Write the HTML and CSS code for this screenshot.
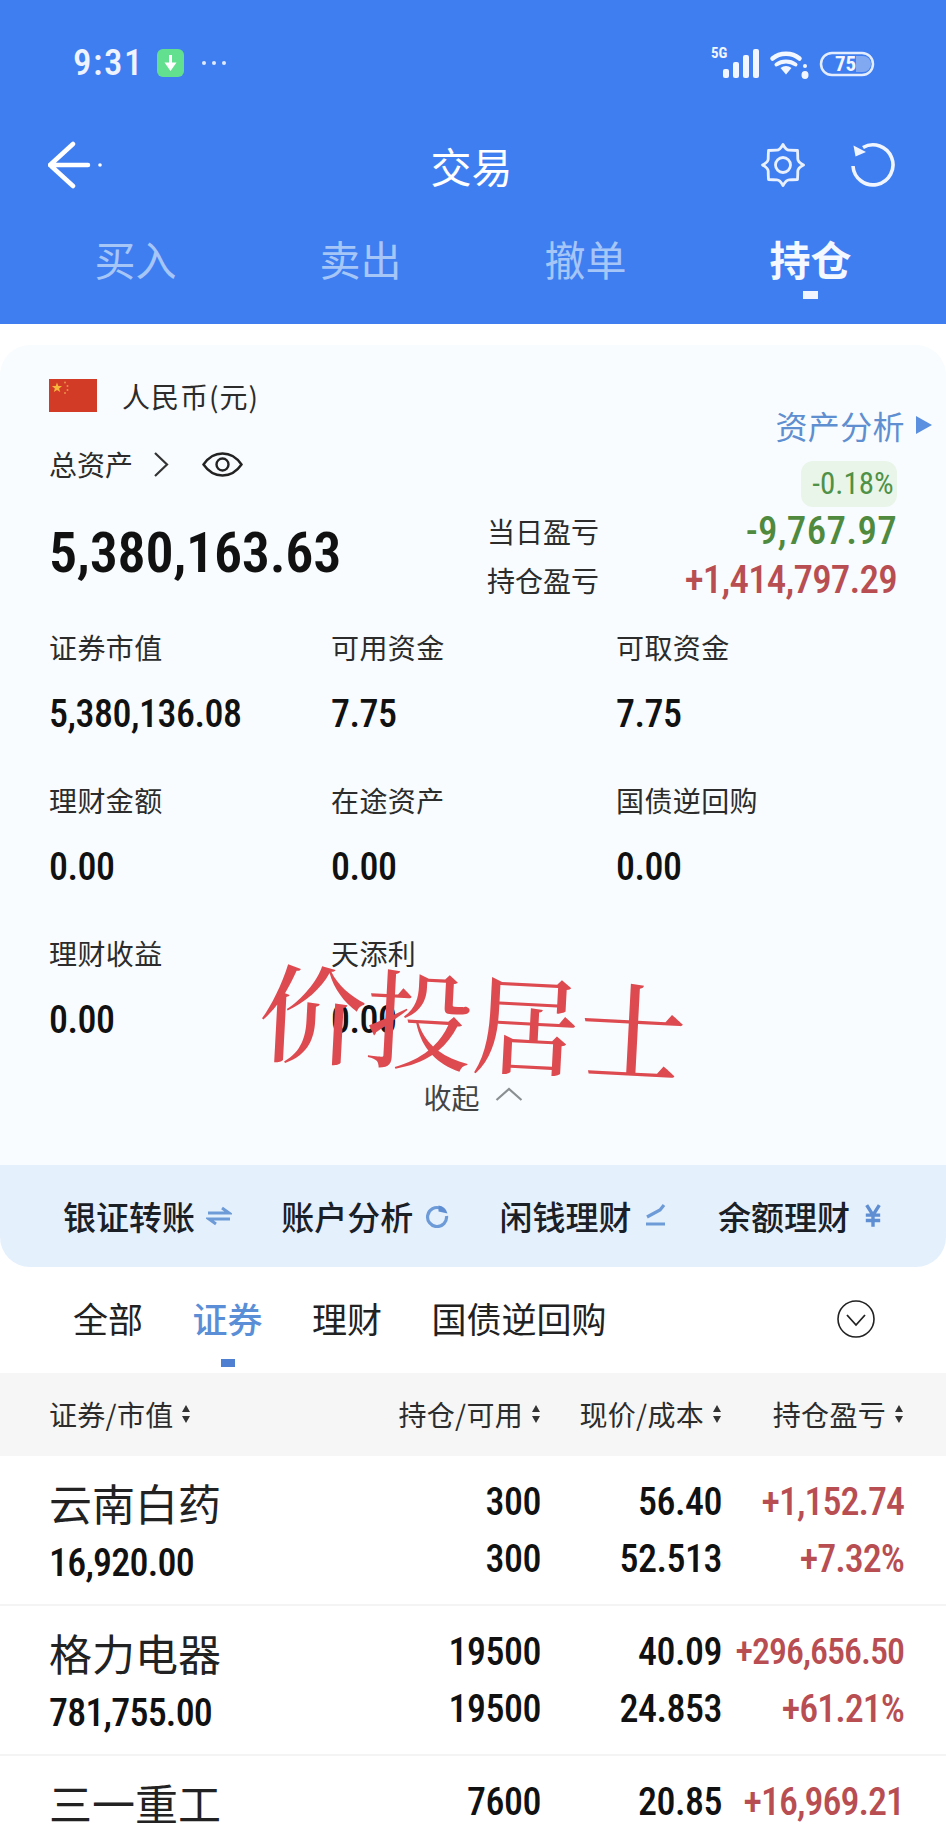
FILE: index.html
```html
<!DOCTYPE html>
<html lang="zh-CN">
<head>
<meta charset="utf-8">
<title>交易</title>
<link rel="stylesheet" href="styles.css">
</head>
<body>
<div class="page">
  <header class="header">
    <div class="status">
      <div class="status-left">
        <span class="time num">9:31</span>
        <svg class="dl" viewBox="0 0 27 28"><rect width="27" height="28" rx="6" fill="#63e08f"/><path d="M13.5 6v9" stroke="#fff" stroke-width="3"/><path d="M7.5 13.5h12L13.5 22z" fill="#fff"/></svg>
        <svg class="dots" viewBox="0 0 26 6"><circle cx="3" cy="3" r="2" fill="#dfe9fd"/><circle cx="13" cy="3" r="2" fill="#dfe9fd"/><circle cx="23" cy="3" r="2" fill="#dfe9fd"/></svg>
      </div>
      <svg class="status-right" viewBox="0 0 165 36">
        <text x="1" y="13" class="sig-text">5G</text>
        <g fill="#f2f6ff">
          <rect x="13" y="24" width="6" height="9" rx="2"/>
          <rect x="23" y="17" width="6" height="16" rx="2"/>
          <rect x="33" y="10" width="6" height="23" rx="2"/>
          <rect x="43" y="4" width="6" height="29" rx="2"/>
          <path d="M76 29.5l-5.5-6.5c3.300-2.700 7.700-2.700 11 0z"/>
          <ellipse cx="95" cy="30" rx="3.500" ry="4"/>
          <circle cx="95" cy="21" r="2"/>
        </g>
        <g fill="none" stroke="#f2f6ff" stroke-linecap="round">
          <path d="M62.500 13.500c7.500-6.500 19.500-6.500 27 0" stroke-width="4.500"/>
          <path d="M66.500 19.500c5.500-4 13.500-4 19 0" stroke-width="4"/>
        </g>
        <rect x="111" y="8" width="52" height="22" rx="11" fill="none" stroke="#e4edfe" stroke-width="2.500"/>
        <path d="M146 11h7a8 8 0 0 1 0 16h-7z" fill="#80a9f2"/>
        <text x="125" y="26" class="bat-text">75</text>
      </svg>
    </div>
    <nav class="nav">
      <svg class="back" viewBox="0 0 55 48"><path d="M25 3L2 24l23 21M2 24h38" fill="none" stroke="#fff" stroke-width="4.500" stroke-linecap="round" stroke-linejoin="round"/><circle cx="52" cy="24" r="1.800" fill="#fff"/></svg>
      <h1 class="title">交易</h1>
      <div class="nav-actions">
        <svg class="gear" viewBox="0 0 44 44"><path d="M22 1.500Q25 7.200 28.100 7.200T36.500 7.500Q36.800 13 36.800 15.900T42.500 22Q36.800 25 36.800 28.100T36.500 36.500Q31 36.800 28.100 36.800T22 42.500Q19 36.800 15.900 36.800T7.500 36.500Q7.200 31 7.200 28.100T1.500 22Q7.200 19 7.200 15.900T7.500 7.500Q13 7.200 15.900 7.200T22 1.500Z" fill="none" stroke="#e9f0fe" stroke-width="2.800" stroke-linejoin="round"/><circle cx="22" cy="22" r="7.500" fill="none" stroke="#e9f0fe" stroke-width="2.800"/></svg>
        <svg class="refresh" viewBox="0 0 46 46"><path d="M13 5.500A20 20 0 1 1 3 24" fill="none" stroke="#f0f5ff" stroke-width="3.600"/><path d="M3.500 3.500l2 11L16 10z" fill="#f0f5ff"/></svg>
      </div>
    </nav>
    <div class="tabs">
      <div class="tab">买入</div>
      <div class="tab">卖出</div>
      <div class="tab">撤单</div>
      <div class="tab tab-on">持仓<i class="tab-bar"></i></div>
    </div>
  </header>

  <section class="card">
    <div class="summary">
      <div class="summary-left">
        <div class="cur">
          <svg class="flag" viewBox="0 0 48 33"><rect width="48" height="33" fill="#d23c26"/><path d="M8 3.500l1.300 3.600h3.800l-3 2.300 1.100 3.600-3.200-2.100-3.200 2.100 1.100-3.600-3-2.300h3.800z" fill="#f6b73c"/><g fill="#e9914a"><circle cx="16" cy="3.500" r="1"/><circle cx="18.500" cy="7" r="1"/><circle cx="18.500" cy="11" r="1"/><circle cx="16" cy="14" r="1"/></g></svg>
          <span>人民币(元)</span>
        </div>
        <div class="total-label">
          <span>总资产</span>
          <svg class="chev" viewBox="0 0 16 25"><path d="M2 1l12 11.500L2 24" fill="none" stroke="#333" stroke-width="2.200"/></svg>
          <svg class="eye" viewBox="0 0 41 25"><path d="M1.500 12.500C7 4.500 13 1.500 20.500 1.500S34 4.500 39.500 12.500C34 20.500 28 23.500 20.500 23.500S7 20.500 1.500 12.500Z" fill="none" stroke="#222" stroke-width="2.400"/><circle cx="20.500" cy="12.500" r="6" fill="none" stroke="#222" stroke-width="2.400"/></svg>
        </div>
        <div class="total num">5,380,163.63</div>
      </div>
      <div class="summary-right">
        <div class="analysis">资产分析<svg class="tri" viewBox="0 0 16 18"><path d="M0 0l16 9L0 18z" fill="#5b8fe0"/></svg></div>
        <div class="badge num">-0.18%</div>
        <div class="pl pl-day"><span>当日盈亏</span><b class="num green">-9,767.97</b></div>
        <div class="pl pl-hold"><span>持仓盈亏</span><b class="num red">+1,414,797.29</b></div>
      </div>
    </div>
    <div class="stats">
      <div class="stat"><div class="stat-k">证券市值</div><div class="stat-v num">5,380,136.08</div></div>
      <div class="stat"><div class="stat-k">可用资金</div><div class="stat-v num">7.75</div></div>
      <div class="stat"><div class="stat-k">可取资金</div><div class="stat-v num">7.75</div></div>
      <div class="stat"><div class="stat-k">理财金额</div><div class="stat-v num">0.00</div></div>
      <div class="stat"><div class="stat-k">在途资产</div><div class="stat-v num">0.00</div></div>
      <div class="stat"><div class="stat-k">国债逆回购</div><div class="stat-v num">0.00</div></div>
      <div class="stat"><div class="stat-k">理财收益</div><div class="stat-v num">0.00</div></div>
      <div class="stat"><div class="stat-k">天添利</div><div class="stat-v num">0.00</div></div>
    </div>
    <div class="collapse">
      <span>收起</span>
      <svg class="up" viewBox="0 0 28 14"><path d="M1.500 13L14 2l12.500 11" fill="none" stroke="#8a8f92" stroke-width="2.200"/></svg>
    </div>
  </section>

  <section class="tools">
    <div class="tool">银证转账<svg class="ti" viewBox="0 0 26 20"><path d="M2 7h21L16 2M24 13H3l7 5" fill="none" stroke="#6d9bd8" stroke-width="3"/></svg></div>
    <div class="tool">账户分析<svg class="ti" viewBox="0 0 26 24"><path d="M16.500 4.200A9.500 9.500 0 1 0 22.500 12" fill="none" stroke="#6d9bd8" stroke-width="3.200"/><path d="M14.500 7.500V1.500A10 10 0 0 1 23.500 9.500z" fill="#5f8fd2"/></svg></div>
    <div class="tool">闲钱理财<svg class="ti" viewBox="0 0 26 24"><path d="M4 13L17 6l4-5M3 20h19" fill="none" stroke="#6d9bd8" stroke-width="3.200"/></svg></div>
    <div class="tool">余额理财<svg class="ti ti-yen" viewBox="0 0 20 26"><path d="M3 1l7 11 7-11M2 12h16M2 18h16M10 12v13" fill="none" stroke="#5f8fd2" stroke-width="3.800"/></svg></div>
  </section>

  <div class="subtabs">
    <div class="sub">全部</div>
    <div class="sub sub-on">证券<i class="sub-bar"></i></div>
    <div class="sub">理财</div>
    <div class="sub">国债逆回购</div>
    <svg class="expand" viewBox="0 0 38 38"><circle cx="19" cy="19" r="18" fill="none" stroke="#222" stroke-width="1.600"/><path d="M10 15l9 10 9-10" fill="none" stroke="#222" stroke-width="1.800"/></svg>
  </div>

  <div class="thead">
    <div class="th th-l">证券/市值<svg class="sort" viewBox="0 0 10 20"><path d="M5 1l4 7H1zM5 19l4-7H1z" fill="#333"/></svg></div>
    <div class="th">持仓/可用<svg class="sort" viewBox="0 0 10 20"><path d="M5 1l4 7H1zM5 19l4-7H1z" fill="#333"/></svg></div>
    <div class="th">现价/成本<svg class="sort" viewBox="0 0 10 20"><path d="M5 1l4 7H1zM5 19l4-7H1z" fill="#333"/></svg></div>
    <div class="th">持仓盈亏<svg class="sort" viewBox="0 0 10 20"><path d="M5 1l4 7H1zM5 19l4-7H1z" fill="#333"/></svg></div>
  </div>

  <div class="row">
    <div class="c-name"><div class="name">云南白药</div><div class="mv num">16,920.00</div></div>
    <div class="c-num num"><div>300</div><div>300</div></div>
    <div class="c-num num"><div>56.40</div><div>52.513</div></div>
    <div class="c-num num red"><div>+1,152.74</div><div>+7.32%</div></div>
  </div>
  <div class="row">
    <div class="c-name"><div class="name">格力电器</div><div class="mv num">781,755.00</div></div>
    <div class="c-num num"><div>19500</div><div>19500</div></div>
    <div class="c-num num"><div>40.09</div><div>24.853</div></div>
    <div class="c-num num red"><div class="tight">+296,656.50</div><div>+61.21%</div></div>
  </div>
  <div class="row">
    <div class="c-name"><div class="name">三一重工</div></div>
    <div class="c-num num"><div>7600</div></div>
    <div class="c-num num"><div>20.85</div></div>
    <div class="c-num num red"><div>+16,969.21</div></div>
  </div>

  <div class="stamp">价投居士</div>
</div>
</body>
</html>
```

FILE: styles.css
```css
* { box-sizing: border-box; }
html, body { margin: 0; padding: 0; height: 1843px; overflow: hidden; background: #fff; }
body { font-family: "Noto Sans CJK SC", "Liberation Sans", sans-serif; color: #222; }
.page { position: relative; width: 946px; height: 1843px; overflow: hidden; }
.num { font-family: "Roboto", sans-serif; font-stretch: 75%; font-weight: 500; }

.header { height: 324px; background: #3f7ef1; color: #fff; }
.status { height: 126px; display: flex; align-items: center; justify-content: space-between; padding: 0 71px 0 73px; }
.status-left { display: flex; align-items: center; }
.time { font-size: 37px; line-height: 40px; font-weight: 500; color: #eef3fe; letter-spacing: 1.500px; }
.dl { width: 27px; height: 28px; margin-left: 13px; }
.dots { width: 26px; height: 6px; margin-left: 17px; }
.status-right { width: 165px; height: 36px; }
.sig-text { font: 700 15px "Roboto", sans-serif; font-stretch: 75%; fill: #f2f6ff; }
.bat-text { font: 700 21px "Roboto", sans-serif; font-stretch: 75%; fill: #f2f6ff; }

.nav { height: 78px; display: grid; grid-template-columns: 1fr auto 1fr; align-items: center; padding: 0 51px 0 48px; }
.back { width: 55px; height: 48px; }
.title { margin: 0; font-size: 41px; line-height: 50px; font-weight: 400; }
.nav-actions { display: flex; justify-content: flex-end; align-items: center; gap: 45px; }
.gear { width: 44px; height: 44px; }
.refresh { width: 46px; height: 46px; margin-right: -1px; }

.tabs { display: grid; grid-template-columns: repeat(4, 225px); padding-left: 23px; margin-top: 26px; }
.tab { display: flex; flex-direction: column; align-items: center; font-size: 41px; line-height: 56px; color: #a6c6f8; }
.tab-on { color: #f4f8ff; font-weight: 700; }
.tab-bar { width: 15px; height: 8px; margin-top: 5px; background: #f0f5ff; }

.card { margin-top: 21px; height: 820px; padding-top: 34px; background: #f8fcfe; border-radius: 30px 30px 0 0; }
.summary { display: flex; justify-content: space-between; padding: 0 49px; }
.cur { display: flex; align-items: center; height: 33px; font-size: 28px; color: #2c2c2c; letter-spacing: 1px; }
.flag { width: 48px; height: 33px; margin-right: 25px; }
.total-label { display: flex; align-items: center; height: 32px; margin-top: 36px; font-size: 28px; color: #2c2c2c; }
.chev { width: 16px; height: 25px; margin-left: 20px; }
.eye { width: 41px; height: 25px; margin-left: 33px; }
.total { margin-top: 43px; font-size: 56px; line-height: 60px; font-weight: 600; color: #111; letter-spacing: -0.300px; }

.summary-right { width: 410px; display: flex; flex-direction: column; align-items: flex-end; }
.analysis { display: flex; align-items: center; margin: 26px -35px 0 0; font-size: 32px; line-height: 40px; color: #5f8fd0; letter-spacing: 0.400px; }
.tri { width: 16px; height: 18px; margin-left: 11px; }
.badge { margin-top: 16px; width: 96px; height: 46px; padding-left: 8px; border-radius: 12px; background: #e9f5e9; color: #4f9146; font-size: 31px; font-weight: 400; line-height: 46px; text-align: center; white-space: nowrap; }
.pl { width: 100%; display: flex; justify-content: space-between; align-items: center; font-size: 28px; line-height: 44px; color: #2c2c2c; }
.pl-day { margin-top: 2px; }
.pl-hold { margin-top: 5px; }
.pl b { font-size: 39px; font-weight: 500; }
.pl .green { letter-spacing: 0.300px; }
.pl .red { letter-spacing: -0.800px; }
.green { color: #4f8a3e; }
.red { color: #b84e52; }

.stats { display: grid; grid-template-columns: 282px 285px 1fr; grid-auto-rows: 108px; row-gap: 45px; margin-top: 27px; padding-left: 49px; }
.stat-k { font-size: 28px; line-height: 36px; color: #2c2c2c; letter-spacing: 0.400px; }
.stat-v { margin-top: 27px; font-size: 38px; line-height: 44px; color: #111; letter-spacing: -0.500px; }

.collapse { display: flex; justify-content: center; align-items: center; gap: 15px; margin-top: 36px; font-size: 28px; line-height: 36px; color: #444; }
.up { width: 28px; height: 14px; margin-top: -6px; }

.tools { height: 102px; display: grid; grid-template-columns: repeat(4, 218.300px); align-items: center; padding-left: 63px; background: #e5f0fd; border-radius: 0 0 30px 30px; font-size: 33px; font-weight: 500; color: #1a2026; }
.tool { display: flex; align-items: center; white-space: nowrap; }
.ti { width: 26px; height: 24px; margin-left: 11px; }
.ti-yen { width: 18px; height: 24px; margin-left: 14px; }

.subtabs { height: 106px; display: flex; align-items: flex-start; gap: 49.500px; padding: 23px 71px 0 73px; font-size: 35px; line-height: 56px; color: #222; }
.sub { display: flex; flex-direction: column; align-items: center; }
.sub-on { color: #5a8ed6; font-weight: 500; }
.sub-bar { width: 14px; height: 8px; margin-top: 13px; background: #4f7fd0; }
.expand { width: 38px; height: 38px; margin: 10px 0 0 auto; }

.thead, .row { display: grid; grid-template-columns: 1fr 120px 181px 182px; padding: 0 42px 0 49px; }
.thead { height: 83px; padding-bottom: 2px; align-items: center; background: #f6f6f6; font-size: 28px; color: #2c2c2c; letter-spacing: 0.300px; }
.th { display: flex; justify-content: flex-end; align-items: center; white-space: nowrap; }
.th-l { justify-content: flex-start; }
.sort { width: 10px; height: 20px; margin-left: 8px; flex: none; }

.row { height: 150px; align-items: start; padding-top: 28px; border-bottom: 2px solid #f4f4f4; }
.row:last-of-type { border-bottom: 0; }
.name { margin-top: -8px; font-size: 43px; line-height: 52px; color: #222; }
.mv { margin-top: 17px; font-size: 38px; line-height: 36px; color: #111; letter-spacing: -0.800px; }
.c-num { display: flex; flex-direction: column; gap: 21px; align-items: flex-end; font-size: 38px; line-height: 36px; color: #111; white-space: nowrap; letter-spacing: -0.500px; }
.c-num.red { color: #b84e52; letter-spacing: -1px; }
.tight { font-size: 36px; }

.stamp { position: absolute; left: 259px; top: 948px; font-family: "Noto Serif CJK SC", "Noto Sans CJK SC", serif; font-size: 107px; line-height: 140px; font-weight: 500; color: #dd4a50; white-space: nowrap; transform: rotate(3deg); }
```
